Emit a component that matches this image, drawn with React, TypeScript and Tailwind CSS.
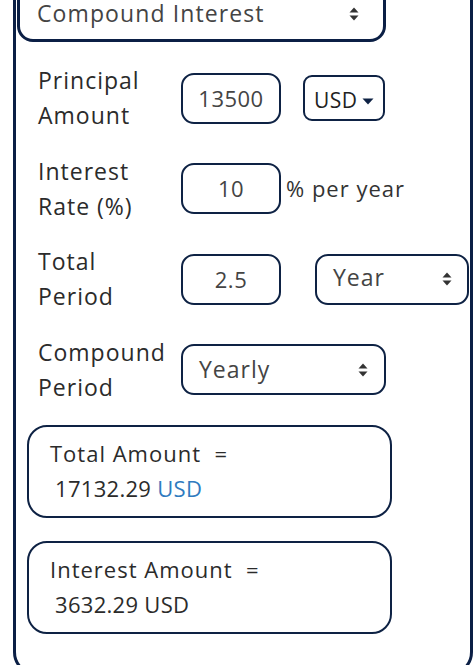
import React from "react";

const UpDown = () => (
  <svg width="10" height="14" viewBox="0 0 10 14" className="shrink-0">
    <path d="M5 0.5 L9.5 5.5 H0.5 Z" fill="#333" />
    <path d="M5 13.5 L9.5 8.5 H0.5 Z" fill="#333" />
  </svg>
);

const Caret = () => (
  <svg width="12" height="7" viewBox="0 0 12 7" className="shrink-0">
    <path d="M0.5 0.5 H11.5 L6 6.5 Z" fill="#0e2244" />
  </svg>
);

const Field = ({ label, children }: { label: string[]; children: React.ReactNode }) => (
  <div className="flex items-center h-[70px]">
    <div className="w-[143px] shrink-0 text-[23px] leading-[35px] text-[#2b2b2b] tracking-[1px]">
      {label.map((l) => (
        <div key={l}>{l}</div>
      ))}
    </div>
    {children}
  </div>
);

const NumBox = ({ value }: { value: string }) => (
  <div className="w-[100px] h-[51px] border-2 border-[#0e2244] rounded-[13px] flex items-center justify-center text-[22px] text-[#444] tracking-[0.5px] shrink-0">
    {value}
  </div>
);

export default function App() {
  return (
    <div className="h-[665px] bg-white overflow-hidden pt-px">
      <div
        className="-mt-[41px] ml-[13px] w-[460px] h-[716px] border-[3px] border-[#0b1f45] rounded-b-[24px] pt-[22px] pl-[1px]"
        style={{ fontFamily: '"Open Sans", sans-serif' }}
      >
        {/* calculator type */}
        <div className="w-[369px] h-[57px] border-[3px] border-[#0b1f45] rounded-[16px] flex items-center justify-between pl-[17px] pr-[24px]">
          <span className="text-[23px] text-[#444] tracking-[1.1px]">Compound Interest</span>
          <UpDown />
        </div>

        <div className="pl-[21px] pt-[21px] flex flex-col gap-[20.5px]">
          <Field label={["Principal", "Amount"]}>
            <NumBox value="13500" />
            <div className="ml-[22px] w-[82px] h-[46px] border-2 border-[#0e2244] rounded-[9px] flex items-center gap-[4px] pl-[9px] pt-[6px] text-[21px] text-[#222] tracking-[0.5px]">
              USD
              <Caret />
            </div>
          </Field>

          <Field label={["Interest", "Rate (%)"]}>
            <NumBox value="10" />
            <span className="ml-[5px] text-[22px] text-[#333] tracking-[1px]">% per year</span>
          </Field>

          <Field label={["Total", "Period"]}>
            <NumBox value="2.5" />
            <div className="ml-[34px] w-[154px] h-[51px] border-2 border-[#0e2244] rounded-[13px] flex items-center justify-between pl-[16px] pr-[15px] text-[23px] text-[#444] tracking-[1px]">
              <span className="-mt-[4px]">Year</span>
              <UpDown />
            </div>
          </Field>

          <Field label={["Compound", "Period"]}>
            <div className="w-[205px] h-[51px] border-2 border-[#0e2244] rounded-[13px] flex items-center justify-between pl-[16px] pr-[16px] text-[23px] text-[#444] tracking-[1px]">
              <span>Yearly</span>
              <UpDown />
            </div>
          </Field>
        </div>

        <div className="pl-[10px] pt-[20px] flex flex-col gap-[23px] tracking-[1px]">
          <div className="w-[365px] h-[93px] border-2 border-[#0e2244] rounded-[20px] pl-[21px] pt-[9px] text-[22px] leading-[35px] text-[#2b2b2b]">
            <div>Total Amount&nbsp; =</div>
            <div className="pl-[5px] tracking-[0.3px]">
              17132.29 <span className="text-[#2f7bbf]">USD</span>
            </div>
          </div>
          <div className="w-[365px] h-[93px] border-2 border-[#0e2244] rounded-[20px] pl-[21px] pt-[9px] text-[22px] leading-[35px] text-[#2b2b2b]">
            <div>Interest Amount&nbsp; =</div>
            <div className="pl-[5px] tracking-[0.3px]">3632.29 USD</div>
          </div>
        </div>
      </div>
    </div>
  );
}
